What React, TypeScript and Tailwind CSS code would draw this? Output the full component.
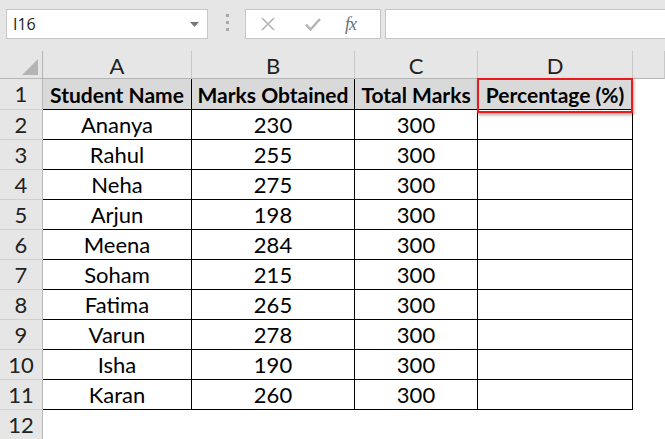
import React from "react";

const ROWS = [
  { name: "Ananya", marks: 230 },
  { name: "Rahul", marks: 255 },
  { name: "Neha", marks: 275 },
  { name: "Arjun", marks: 198 },
  { name: "Meena", marks: 284 },
  { name: "Soham", marks: 215 },
  { name: "Fatima", marks: 265 },
  { name: "Varun", marks: 278 },
  { name: "Isha", marks: 190 },
  { name: "Karan", marks: 260 },
];

const COLS = ["A", "B", "C", "D", ""];
const HEADINGS = ["Student Name", "Marks Obtained", "Total Marks", "Percentage (%)"];

function FormulaBar() {
  return (
    <div className="flex h-[51px] items-start pt-[9px]">
      {/* name box */}
      <div className="ml-[6px] flex h-[30px] w-[202px] items-center justify-between border border-[#c6c6c6] bg-white pl-[6px] pr-[8px]">
        <span className="text-[16px] leading-none text-[#222] font-['Open_Sans',sans-serif]">I16</span>
        <svg width="9" height="5" viewBox="0 0 9 5">
          <path d="M0 0h9L4.5 5z" fill="#777" />
        </svg>
      </div>
      {/* grip */}
      <div className="ml-[18px] mt-[5px] flex flex-col gap-[4px]">
        <span className="h-[3px] w-[3px] bg-[#a8a8a8]" />
        <span className="h-[3px] w-[3px] bg-[#a8a8a8]" />
        <span className="h-[3px] w-[3px] bg-[#a8a8a8]" />
      </div>
      {/* cancel / enter / fx */}
      <div className="ml-[16px] flex h-[30px] w-[136px] items-center border border-[#c6c6c6] bg-white">
        <svg className="ml-[15px]" width="14" height="14" viewBox="0 0 14 14">
          <path d="M1 1l12 12M13 1L1 13" stroke="#b4b4b4" strokeWidth="1.6" />
        </svg>
        <svg className="ml-[30px]" width="16" height="13" viewBox="0 0 16 13">
          <path d="M1 6.5l4.5 5L15 1" stroke="#b4b4b4" strokeWidth="2.4" fill="none" />
        </svg>
        <span className="ml-[24px] text-[18px] leading-none italic text-[#6f6f6f] font-['Liberation_Serif',serif] tracking-[-1px]">
          fx
        </span>
      </div>
      {/* formula input */}
      <div className="ml-[4px] h-[30px] flex-1 border border-r-0 border-[#c6c6c6] bg-white" />
    </div>
  );
}

export default function App() {
  const grid = "grid grid-cols-[43px_149px_163px_123px_155px_32px]";
  const rowHead =
    "flex items-center justify-center border-r border-b border-r-[#b5b5b5] border-b-[#d0d0d0] text-[22px] leading-none text-[#222]";
  const cell = "flex items-center justify-center border-r border-b border-black bg-white text-[22px] leading-none";

  return (
    <div className="relative h-[439px] w-[665px] overflow-hidden bg-[#e6e6e6] font-['Lato',sans-serif] text-black">
      <FormulaBar />

      {/* column headers */}
      <div className={`${grid} h-[28px]`}>
        <div className="relative border-r border-b border-[#b5b5b5]">
          <svg className="absolute bottom-[3px] right-[4px]" width="16" height="16" viewBox="0 0 16 16">
            <path d="M16 0V16H0z" fill="#b4b4b4" />
          </svg>
        </div>
        {COLS.map((c, i) => (
          <div
            key={i}
            className="flex items-center justify-center border-r border-b border-r-[#c8c8c8] border-b-[#b5b5b5] pt-[2px] text-[22px] leading-none text-[#222]"
          >
            {c}
          </div>
        ))}
      </div>

      {/* row 1 */}
      <div className={`${grid} h-[31px]`}>
        <div className={rowHead}>1</div>
        {HEADINGS.map((h) => (
          <div
            key={h}
            className="flex items-center justify-center whitespace-nowrap border-r border-b border-black bg-[#d9d9d9] text-[21px] leading-none font-bold"
          >
            {h}
          </div>
        ))}
        <div className="bg-white" />
      </div>

      {/* data rows */}
      {ROWS.map((r, i) => (
        <div key={r.name} className={`${grid} h-[30px]`}>
          <div className={rowHead}>{i + 2}</div>
          <div className={cell}>{r.name}</div>
          <div className={cell}>{r.marks}</div>
          <div className={cell}>300</div>
          <div className="border-r border-b border-black bg-white" />
          <div className="bg-white" />
        </div>
      ))}

      {/* row 12 */}
      <div className={`${grid} h-[29px]`}>
        <div className="flex items-center justify-center border-r border-[#b5b5b5] text-[22px] leading-none text-[#222]">
          12
        </div>
        <div className="col-span-5 bg-white" />
      </div>

      {/* highlight around D1 */}
      <div className="absolute left-[477px] top-[78px] h-[35px] w-[156px] border-2 border-[#e81c1c] shadow-[1px_2px_3px_rgba(0,0,0,0.35)]" />
    </div>
  );
}
